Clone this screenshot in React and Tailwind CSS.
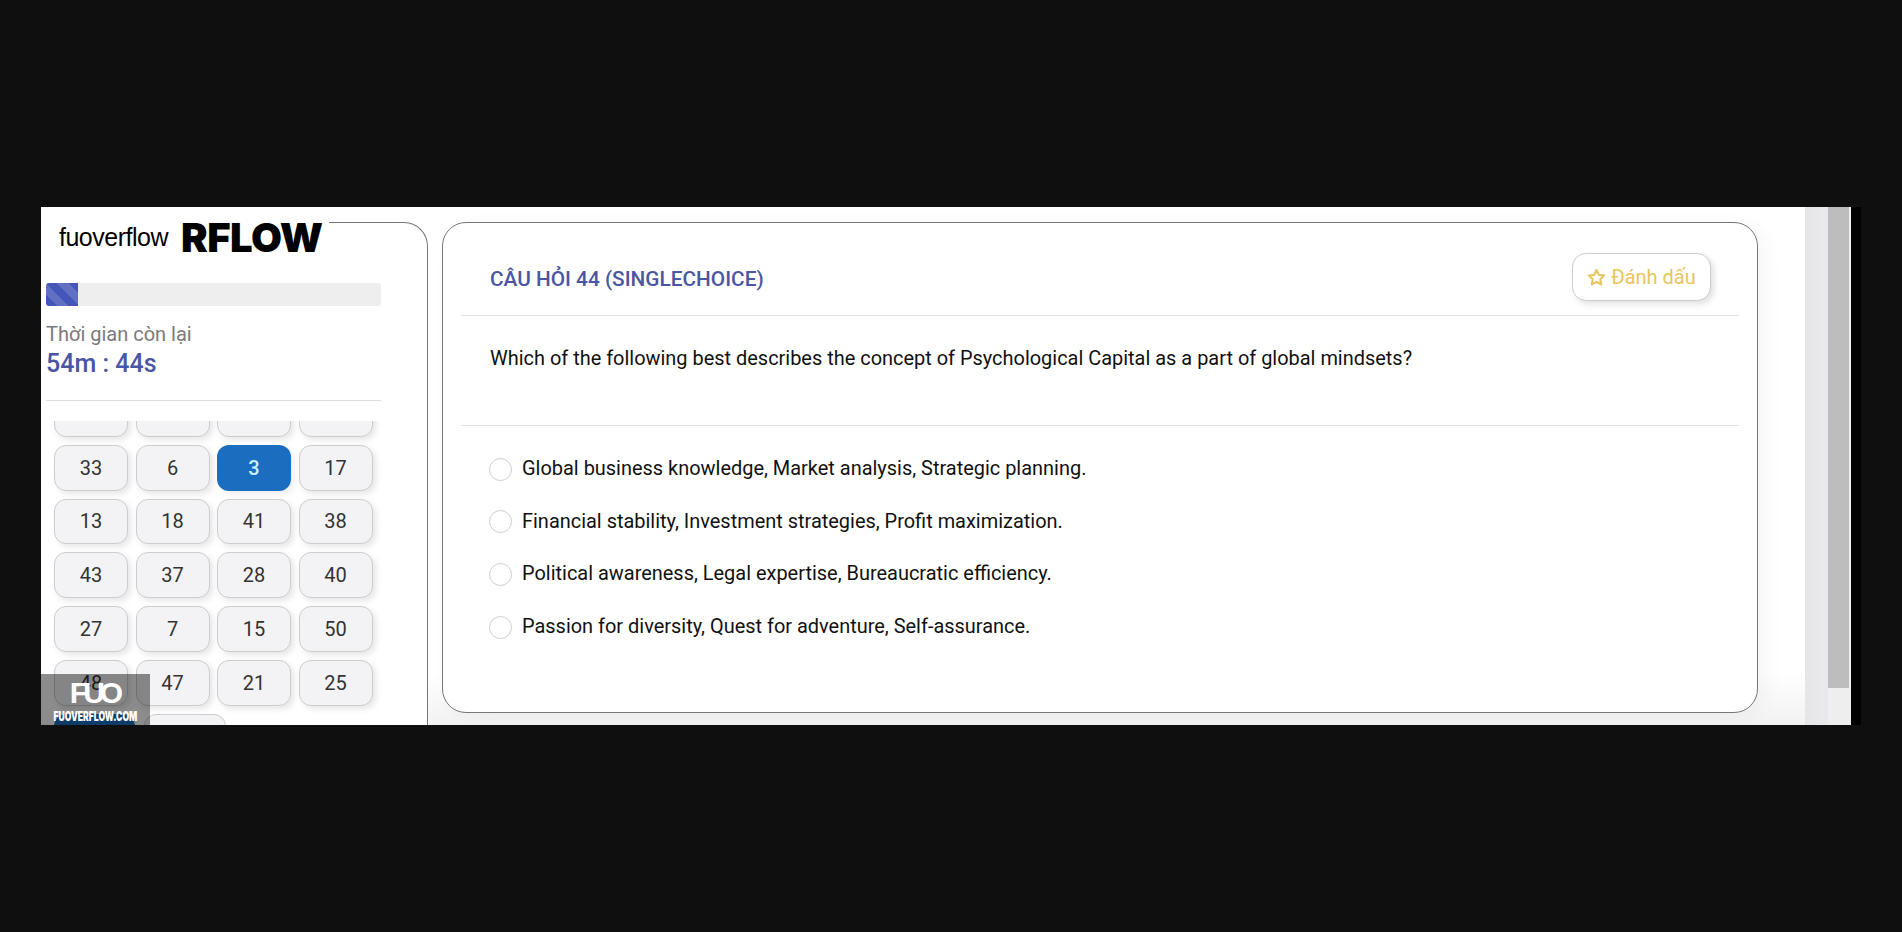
const rows = [
  [null, null, null, null],
  [33, 6, 3, 17],
  [13, 18, 41, 38],
  [43, 37, 28, 40],
  [27, 7, 15, 50],
  [48, 47, 21, 25],
];
const options = [
  "Global business knowledge, Market analysis, Strategic planning.",
  "Financial stability, Investment strategies, Profit maximization.",
  "Political awareness, Legal expertise, Bureaucratic efficiency.",
  "Passion for diversity, Quest for adventure, Self-assurance.",
];

function NumButton({ n }) {
  const active = n === 3;
  return (
    <button
      className={
        active
          ? "w-[74px] h-[45.75px] rounded-[12px] bg-[#1a6dbf] text-[#c9eeff] text-[20px] font-medium shadow-[3px_3px_6px_rgba(0,0,0,0.08)]"
          : "w-[74px] h-[45.75px] rounded-[12px] bg-[#f3f3f5] border border-[#cdcdcd] text-[#333333] text-[20px] shadow-[3px_3px_6px_rgba(0,0,0,0.1)]"
      }
    >
      {n}
    </button>
  );
}

export default function App() {
  return (
    <div className="h-[932px] bg-[#0f0f0f] pt-[207px] overflow-hidden font-['Roboto',sans-serif]">
      <div className="flex h-[518px] w-[1820px] ml-[41px]">
        <div className="relative flex flex-1 min-w-0 overflow-hidden bg-white">
          <aside className="relative mt-[15px] w-[387px] shrink-0 rounded-tr-[24px] border-t border-r border-[#777777] pl-[5px] flex flex-col">
            <div className="absolute left-0 -top-[3px] w-[288px] h-[36px] bg-white flex items-center pl-[18px] gap-[13px]">
              <span className="font-['Liberation_Sans',sans-serif] text-[25px] tracking-[-0.5px] text-black">fuoverflow</span>
              <span className="font-['Inter',sans-serif] text-[40px] leading-none font-black tracking-[-0.5px] text-black">RFLOW</span>
            </div>
            <div className="mt-[60px] w-[335px] h-[23px] shrink-0 rounded-[3px] bg-[#eeeeef] overflow-hidden">
              <div className="h-full w-[32px] bg-[repeating-linear-gradient(45deg,#4456b8_0px,#4456b8_8px,#6270c4_8px,#6270c4_16px)]" />
            </div>
            <div className="mt-[16px] text-[20px] leading-[24px] text-[#7a7a7a]">Thời gian còn lại</div>
            <div className="mt-[3px] text-[25px] leading-[30px] font-medium text-[#4b56a3]">54m : 44s</div>
            <div className="mt-[21px] w-[335px] border-t border-[#dedede]" />
            <div className="mt-[20px] flex-1 min-h-0 overflow-hidden w-[345px] pl-[8px]">
              <div className="-mt-[30px] flex flex-wrap gap-x-[7.5px] gap-y-2">
                {rows.flat().map((n, i) => (
                  <NumButton key={i} n={n} />
                ))}
                <div className="w-[81px] h-[45.75px] rounded-[12px] bg-[#1a6dbf]" />
                <div className="w-[82px] h-[45.75px] ml-[1px] rounded-[12px] bg-[#f3f3f5] border border-[#cdcdcd]" />
              </div>
            </div>
          </aside>

          <main className="flex-1 min-w-0 flex pl-[14px] pt-[15px] pb-[12px] bg-gradient-to-b from-white from-90% to-[#f2f2f2]">
            <section className="w-[1316px] h-[491px] rounded-[24px] border border-[#777777] bg-white shadow-[8px_4px_20px_rgba(0,0,0,0.04)] px-[18px] flex flex-col">
              <header className="h-[93px] shrink-0 border-b border-[#e2e2e2] pl-[29px] pr-[28px] pt-[30px] flex items-start justify-between">
                <h1 className="text-[20.8px] leading-[32px] mt-[10px] font-medium text-[#4b56a3]">CÂU HỎI 44 (SINGLECHOICE)</h1>
                <button className="w-[139px] h-[48px] rounded-[14px] border border-[#cccccc] bg-white shadow-[3px_3px_6px_rgba(0,0,0,0.12)] flex items-center justify-center gap-[5px] text-[20px] text-[#e8c55e]">
                  <svg width="19" height="19" viewBox="0 0 24 24" fill="none" stroke="#e8c55e" strokeWidth="2.6" strokeLinejoin="round">
                    <path d="M12 2.5l2.9 6.2 6.8.8-5 4.6 1.3 6.7-6-3.4-6 3.4 1.3-6.7-5-4.6 6.8-.8z" />
                  </svg>
                  Đánh dấu
                </button>
              </header>
              <div className="h-[110px] shrink-0 border-b border-[#e2e2e2] pl-[29px] pt-[30px] text-[19.95px] leading-[24px] text-[#111111]">
                Which of the following best describes the concept of Psychological Capital as a part of global mindsets?
              </div>
              <div className="pl-[28px] pt-[31px] flex flex-col gap-[28.7px]">
                {options.map((o) => (
                  <label key={o} className="flex items-center gap-[10px] h-[24px] text-[19.95px] text-[#111111]">
                    <span className="w-[23px] h-[23px] rounded-full border border-[#cfcfcf] bg-white" />
                    {o}
                  </label>
                ))}
              </div>
            </section>
          </main>

          <div className="absolute left-0 bottom-0 w-[109px] h-[51px] bg-black/45 flex flex-col items-center text-white">
            <span className="font-['Liberation_Sans',sans-serif] text-[30px] leading-[30px] mt-[4px] font-bold tracking-[-5px] pr-[3px]">FUO</span>
            <span className="font-['Inter',sans-serif] text-[13px] leading-[14px] mt-[1px] font-black whitespace-nowrap scale-x-[0.66]">FUOVERFLOW.COM</span>
          </div>

          <div className="w-[46px] shrink-0 flex bg-[#eeeeee]">
            <div className="w-[23px] bg-gradient-to-r from-[#e6e6e6] to-[#eaeaee]" />
            <div className="w-[21px] h-[481px] bg-[#bdbdbd]" />
          </div>
        </div>
        <div className="w-[10px] h-[518px] bg-black shrink-0" />
      </div>
    </div>
  );
}
